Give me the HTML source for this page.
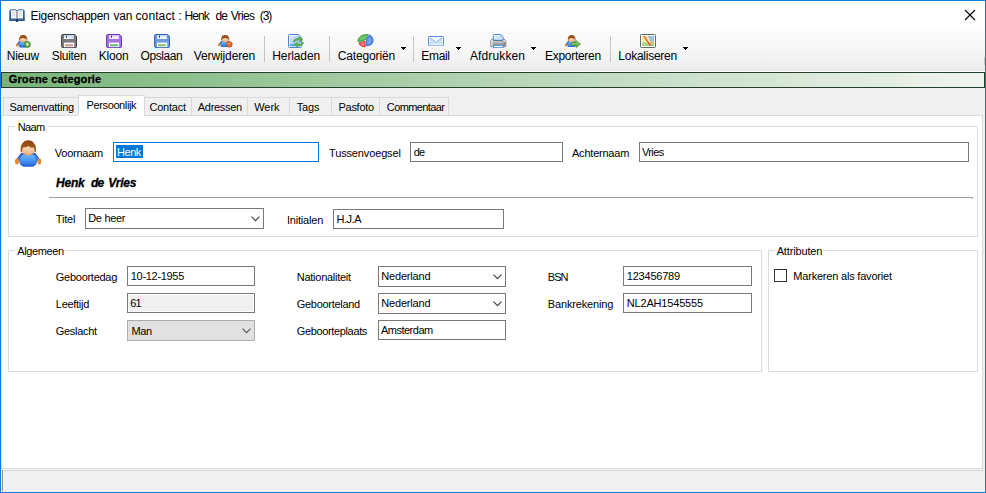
<!DOCTYPE html>
<html lang="nl">
<head>
<meta charset="utf-8">
<title>Eigenschappen van contact : Henk de Vries (3)</title>
<style>
html,body{margin:0;padding:0;}
body{width:986px;height:493px;overflow:hidden;background:#fff;position:relative;font-family:"Liberation Sans",sans-serif;font-size:11px;}
#win{position:absolute;left:0;top:0;width:984px;height:491px;border:1px solid #117cd6;background:#f0f0f0;overflow:hidden;}
.a{position:absolute;box-sizing:border-box;}
.t{position:absolute;white-space:nowrap;line-height:16px;height:16px;}
#titlebar{left:1px;top:1px;width:984px;height:30px;background:#fff;}
#toolbar{left:1px;top:31px;width:984px;height:40px;background:linear-gradient(#fbfbfb 0%,#f8f8f8 35%,#f2f2f2 70%,#ebebeb 100%);}
#tbline{left:1px;top:71px;width:984px;height:1px;background:#fdfdfd;}
.sep{width:1px;height:26px;top:36px;background:#c5c5c5;}
.arr{width:0;height:0;border-left:3px solid transparent;border-right:3px solid transparent;border-top:3px solid #000;top:47px;}
#green{left:1px;top:72px;width:984px;height:16px;border:1px solid #24402a;background:linear-gradient(90deg,#78b478,#f0f4f0);}
.tab{top:97px;height:18px;background:#f0f0f0;border:1px solid #d9d9d9;border-bottom:none;}
.tabsel{top:95px;height:21px;background:#fff;border:1px solid #d9d9d9;border-bottom:none;}
#page{left:1px;top:115px;width:982px;height:354px;background:#fff;border:1px solid #dcdcdc;}
.grp{border:1px solid #dcdcdc;}
.cap{background:#fff;height:12px;}
.inp{background:#fff;border:1px solid #7a7a7a;}
.cmb{background:#fff;border:1px solid #7a7a7a;}
.hr{height:1px;background:#a0a0a0;}
#status{left:4px;top:470px;width:980px;height:21px;background:#f0f0f0;border-top:1px solid #dadada;}
#grip{left:2px;top:470px;width:1px;height:21px;background:#8c8c8c;}
#grip2{left:3px;top:470px;width:1px;height:21px;background:#fafafa;}
</style>
</head>
<body>
<div id="win"></div>
<div class="a" id="titlebar"></div>
<div class="a" id="toolbar"></div>
<div class="a" id="tbline"></div>
<div class="a sep" style="left:264px"></div>
<div class="a sep" style="left:329px"></div>
<div class="a sep" style="left:413px"></div>
<div class="a sep" style="left:610px"></div>
<svg class="a" style="left:400px;top:46px" width="7" height="5" viewBox="0 0 7 5" shape-rendering="crispEdges"><path d="M0 0H7V2H6V3H5V4H4V5H3V4H2V3H1V2H0Z" fill="#fff"/><path d="M1 1H6V2H5V3H4V4H3V3H2V2H1Z" fill="#000"/></svg>
<svg class="a" style="left:455px;top:46px" width="7" height="5" viewBox="0 0 7 5" shape-rendering="crispEdges"><path d="M0 0H7V2H6V3H5V4H4V5H3V4H2V3H1V2H0Z" fill="#fff"/><path d="M1 1H6V2H5V3H4V4H3V3H2V2H1Z" fill="#000"/></svg>
<svg class="a" style="left:530px;top:46px" width="7" height="5" viewBox="0 0 7 5" shape-rendering="crispEdges"><path d="M0 0H7V2H6V3H5V4H4V5H3V4H2V3H1V2H0Z" fill="#fff"/><path d="M1 1H6V2H5V3H4V4H3V3H2V2H1Z" fill="#000"/></svg>
<svg class="a" style="left:682px;top:46px" width="7" height="5" viewBox="0 0 7 5" shape-rendering="crispEdges"><path d="M0 0H7V2H6V3H5V4H4V5H3V4H2V3H1V2H0Z" fill="#fff"/><path d="M1 1H6V2H5V3H4V4H3V3H2V2H1Z" fill="#000"/></svg>
<div class="a" id="green"></div>
<div class="a" style="left:984px;top:57px;width:1px;height:8px;background:#c4c4c4"></div>
<!-- tabs -->
<div class="a" id="page"></div>
<div class="a tab" style="left:3px;width:76px"></div>
<div class="a tab" style="left:144px;width:48px"></div>
<div class="a tab" style="left:191px;width:57px"></div>
<div class="a tab" style="left:247px;width:43px"></div>
<div class="a tab" style="left:289px;width:43px"></div>
<div class="a tab" style="left:331px;width:49px"></div>
<div class="a tab" style="left:379px;width:70px"></div>
<div class="a tabsel" style="left:78px;width:67px"></div>
<!-- group boxes -->
<div class="a grp" style="left:8px;top:126px;width:970px;height:111px"></div>
<div class="a cap" style="left:15px;top:121px;width:32px"></div>
<div class="a grp" style="left:8px;top:250px;width:754px;height:122px"></div>
<div class="a cap" style="left:15px;top:245px;width:50px"></div>
<div class="a grp" style="left:768px;top:250px;width:210px;height:122px"></div>
<div class="a cap" style="left:775px;top:245px;width:48px"></div>
<!-- Naam -->
<div class="a inp" style="left:113px;top:142px;width:206px;height:20px;border-color:#0078d7"></div>
<div class="a" style="left:116px;top:145px;width:27px;height:13px;background:#0078d7"></div>
<div class="a inp" style="left:410px;top:142px;width:153px;height:20px"></div>
<div class="a inp" style="left:639px;top:142px;width:330px;height:20px"></div>
<div class="a hr" style="left:49px;top:197px;width:924px"></div>
<div class="a hr" style="left:972px;top:198px;width:1px"></div>
<div class="a cmb" style="left:85px;top:208px;width:179px;height:21px"></div>
<div class="a inp" style="left:333px;top:209px;width:171px;height:20px"></div>
<!-- Algemeen -->
<div class="a inp" style="left:127px;top:266px;width:128px;height:20px"></div>
<div class="a inp" style="left:127px;top:293px;width:128px;height:20px;background:#f0f0f0;box-shadow:inset 0 0 0 1px #fff"></div>
<div class="a cmb" style="left:127px;top:320px;width:128px;height:21px;background:#e1e1e1;border-color:#adadad"></div>
<div class="a cmb" style="left:378px;top:266px;width:128px;height:21px"></div>
<div class="a cmb" style="left:378px;top:293px;width:128px;height:21px"></div>
<div class="a inp" style="left:378px;top:320px;width:128px;height:20px"></div>
<div class="a inp" style="left:623px;top:266px;width:129px;height:20px"></div>
<div class="a inp" style="left:623px;top:293px;width:129px;height:20px"></div>
<div class="a" style="left:774px;top:269px;width:13px;height:13px;border:1px solid #333;background:#fff"></div>
<div class="a" id="status"></div>
<div class="a" id="grip"></div><div class="a" id="grip2"></div>
<svg width="0" height="0" style="position:absolute">
<defs>
<linearGradient id="gHair" x1="0" y1="0" x2="0" y2="1"><stop offset="0" stop-color="#8a4210"/><stop offset="1" stop-color="#b4641c"/></linearGradient>
<linearGradient id="gBody" x1="0" y1="0" x2="0" y2="1"><stop offset="0" stop-color="#74bcff"/><stop offset="0.55" stop-color="#4796f4"/><stop offset="1" stop-color="#2761d6"/></linearGradient>
<linearGradient id="gFace" x1="0" y1="0" x2="0" y2="1"><stop offset="0" stop-color="#fbe3c8"/><stop offset="1" stop-color="#e9b184"/></linearGradient>
<radialGradient id="gGreenBall" cx="0.5" cy="0.4" r="0.6"><stop offset="0" stop-color="#9fd67a"/><stop offset="1" stop-color="#3d8f1e"/></radialGradient>
<radialGradient id="gOrangeBall" cx="0.45" cy="0.4" r="0.6"><stop offset="0" stop-color="#ff9a58"/><stop offset="1" stop-color="#d24510"/></radialGradient>
<linearGradient id="gPage" x1="0" y1="0" x2="1" y2="1"><stop offset="0" stop-color="#d8e8fb"/><stop offset="1" stop-color="#8db8ee"/></linearGradient>
<linearGradient id="gEnv" x1="0" y1="0" x2="0" y2="1"><stop offset="0" stop-color="#e4effc"/><stop offset="1" stop-color="#a9c9f2"/></linearGradient>
<linearGradient id="gPrn" x1="0" y1="0" x2="0" y2="1"><stop offset="0" stop-color="#e6e6e6"/><stop offset="0.5" stop-color="#b5b5b5"/><stop offset="1" stop-color="#8a8a8a"/></linearGradient>
<linearGradient id="gArrow" x1="0" y1="0" x2="0" y2="1"><stop offset="0" stop-color="#a5d88a"/><stop offset="1" stop-color="#4c9a2a"/></linearGradient>
<linearGradient id="gShut" x1="0" y1="0" x2="1" y2="0"><stop offset="0" stop-color="#ffffff"/><stop offset="1" stop-color="#cfe0f5"/></linearGradient>
<g id="person">
  <path d="M4.2 8.6 L1.3 12.4 M12 8.6 L14.9 12.4" stroke="#2346c0" stroke-width="1.7" fill="none" stroke-linecap="round"/>
  <path d="M4.2 8.8 L1.5 12.3 M12 8.8 L14.7 12.3" stroke="#7db4f5" stroke-width="0.6" fill="none" stroke-linecap="round"/>
  <path d="M3.6 9.6 C4.8 7.9 11.4 7.9 12.6 9.6 C13.9 12 13.2 15.5 11 15.8 L5.2 15.8 C3 15.5 2.3 12 3.6 9.6 Z" fill="url(#gBody)" stroke="#2a5fd0" stroke-width="0.6"/>
  <ellipse cx="1.2" cy="13" rx="1.2" ry="1.8" fill="#e88a2c"/>
  <ellipse cx="15" cy="13" rx="1.2" ry="1.8" fill="#e88a2c"/>
  <ellipse cx="8.2" cy="5.9" rx="3.9" ry="3.3" fill="url(#gFace)" stroke="#c98a55" stroke-width="0.4"/>
  <path d="M3.5 7.2 C2.3 -2.2 14.1 -2.2 12.9 7.2 L12.1 7.2 C12.2 5.8 11.9 5 11.2 4.6 C9.8 4.9 8.8 4.3 8.3 3.5 C7.6 4.3 6 4.5 5.2 4.4 C4.6 5 4.3 6 4.3 7.2 Z" fill="url(#gHair)"/>
</g>
<g id="floppyshape">
  <path d="M1.6 0.5 L13.6 0.5 L15.5 2.4 L15.5 12.6 Q15.5 13.5 14.6 13.5 L1.6 13.5 Q0.6 13.5 0.6 12.6 L0.6 1.5 Q0.6 0.5 1.6 0.5 Z"/>
</g>
</defs>
</svg>
<!-- book -->
<svg class="a" style="left:9px;top:8.8px" width="16" height="13.2" viewBox="0 0 16 13.2">
  <defs><linearGradient id="gBook" x1="0" y1="0" x2="0" y2="1"><stop offset="0" stop-color="#3272b0"/><stop offset="0.6" stop-color="#1f5796"/><stop offset="1" stop-color="#123866"/></linearGradient></defs>
  <path d="M0.3 1.2 L1.4 1.2 L1.4 0.3 L6.4 0.3 L8 1.4 L9.6 0.3 L14.6 0.3 L14.6 1.2 L15.7 1.2 L15.7 12 L9.4 12 L8.6 13 L7.4 13 L6.6 12 L0.3 12 Z" fill="url(#gBook)"/>
  <path d="M2 1.3 L6.2 1.3 L7.6 2.3 L7.6 9.6 L2 9.6 Z" fill="#fff"/>
  <path d="M14 1.3 L9.8 1.3 L8.4 2.3 L8.4 9.6 L14 9.6 Z" fill="#fff"/>
  <rect x="7.2" y="2.2" width="1.6" height="7.6" fill="#b4b4b4"/>
  <rect x="7.7" y="2.2" width="0.6" height="7.6" fill="#8e8e8e"/>
  <path d="M3 3 H6.4 M3 4.9 H6.4 M3 6.8 H6.4 M9.6 3 H13 M9.6 4.9 H13 M9.6 6.8 H13" stroke="#c8c8c8" stroke-width="0.9"/>
  <path d="M1.2 10.9 H7 M9 10.9 H14.8" stroke="#6f9ac8" stroke-width="0.7"/>
</svg>
<!-- close X -->
<svg class="a" style="left:964px;top:9px" width="12" height="12" viewBox="0 0 12 12"><path d="M1 1 L11 11 M11 1 L1 11" stroke="#000" stroke-width="1.1" fill="none"/></svg>
<!-- Nieuw -->
<svg class="a" style="left:16px;top:35px" width="14" height="12.5" viewBox="0 0 16 16" preserveAspectRatio="none"><use href="#person"/></svg>
<svg class="a" style="left:24px;top:41.4px" width="6.8" height="6.8" viewBox="0 0 8 8"><circle cx="4" cy="4" r="3.6" fill="url(#gGreenBall)" stroke="#2f7d18" stroke-width="0.6"/><ellipse cx="4" cy="4" rx="1" ry="2" fill="#fff" opacity="0.9"/></svg>
<!-- Sluiten (gray floppy) -->
<svg class="a" style="left:61px;top:34px" width="16" height="14" viewBox="0 0 16 14">
  <use href="#floppyshape" fill="#7d7d7d" stroke="#3f3f3f" stroke-width="1"/>
  <rect x="3.2" y="1" width="9.6" height="4" fill="url(#gShut)"/><rect x="3.2" y="1" width="9.6" height="1.6" fill="#bfd9f5"/>
  <rect x="5" y="1.6" width="0.9" height="2.3" fill="#333"/>
  <rect x="3" y="8.6" width="10.2" height="4.6" fill="#fff"/><rect x="4" y="10.2" width="8.2" height="2.2" fill="#d89a96"/>
</svg>
<!-- Kloon (purple floppy) -->
<svg class="a" style="left:106px;top:34px" width="16" height="14" viewBox="0 0 16 14">
  <use href="#floppyshape" fill="#a374e0" stroke="#6a2fb8" stroke-width="1"/>
  <rect x="3.2" y="1" width="9.6" height="4" fill="#f3edfb"/><rect x="3.2" y="1" width="9.6" height="1.6" fill="#d9c8f3"/>
  <rect x="5" y="1.6" width="0.9" height="2.3" fill="#3a1c66"/>
  <rect x="3" y="8.6" width="10.2" height="4.6" fill="#fff"/><rect x="4" y="10.2" width="8.2" height="2.2" fill="#6fbf7d"/>
</svg>
<!-- Opslaan (blue floppy) -->
<svg class="a" style="left:154px;top:34px" width="16" height="14" viewBox="0 0 16 14">
  <use href="#floppyshape" fill="#6e9be0" stroke="#2f5fb3" stroke-width="1"/>
  <rect x="3.2" y="1" width="9.6" height="4" fill="#eef4fc"/><rect x="3.2" y="1" width="9.6" height="1.6" fill="#c6daf5"/>
  <rect x="5" y="1.6" width="0.9" height="2.3" fill="#1c3566"/>
  <rect x="3" y="8.6" width="10.2" height="4.6" fill="#fff"/><rect x="4" y="10.2" width="8.2" height="2.2" fill="#8fc46a"/>
</svg>
<!-- Verwijderen -->
<svg class="a" style="left:218px;top:34.6px" width="14" height="12.3" viewBox="0 0 16 16" preserveAspectRatio="none"><use href="#person"/></svg>
<svg class="a" style="left:226.3px;top:41.1px" width="6.7" height="6.7" viewBox="0 0 8 8"><circle cx="4" cy="4" r="3.5" fill="url(#gOrangeBall)" stroke="#c24a12" stroke-width="0.6"/></svg>
<!-- Herladen -->
<svg class="a" style="left:288px;top:34px" width="17" height="14" viewBox="0 0 17 14">
  <path d="M1.4 0.5 L10.6 0.5 L13.6 3.5 L13.6 12.6 Q13.6 13.5 12.7 13.5 L1.4 13.5 Q0.5 13.5 0.5 12.6 L0.5 1.4 Q0.5 0.5 1.4 0.5 Z" fill="#fff" stroke="#4a86d8" stroke-width="1"/>
  <path d="M1.8 1.8 L10 1.8 L12.4 4.2 L12.4 12.2 L1.8 12.2 Z" fill="url(#gPage)"/>
  <rect x="1.8" y="10" width="10.6" height="2.2" fill="#5aaef5"/>
  <path d="M10.4 0.8 L10.4 3.7 L13.3 3.7" fill="#f4f8fe" stroke="#6a9be0" stroke-width="0.6"/>
  <path d="M5.2 7.6 C6.5 4.6 9.5 3.9 11.6 4.6 L11.2 2.6 L15 5.6 L11.9 8.2 L11.9 6.4 C9.6 5.6 7.2 6.6 6.6 8.2 Z" fill="#5fb04a" stroke="#3f8f2c" stroke-width="0.4"/>
  <path d="M15.8 8.8 C14.6 11.6 11.6 12.3 9.6 11.6 L9.9 13.6 L6.2 10.7 L9.2 8.1 L9.3 9.9 C11.4 10.6 13.6 9.9 14.4 8.2 Z" fill="#5fb04a" stroke="#3f8f2c" stroke-width="0.4"/>
</svg>
<!-- Categorien pie -->
<svg class="a" style="left:357px;top:33px" width="18" height="16" viewBox="-1 -1 18 16">
  <path d="M-0.2 7.2 C0 3.5 4 -0.3 10.3 0.5 L7.4 5.6 L1 8.4 Z" fill="#55b355" stroke="#2f962f" stroke-width="0.7" stroke-linejoin="round"/>
  <path d="M1.2 6.4 C2.2 3.8 5 1.8 8.4 1.6 L6.6 4.9 Z" fill="#7ccb7c" opacity="0.8"/>
  <path d="M0.9 9.6 L6.9 6.9 L7.2 13 C4.5 13 1.8 11.8 0.9 9.6 Z" fill="#ee5a5a" stroke="#e02a2a" stroke-width="0.7" stroke-linejoin="round"/>
  <path d="M2.6 9.9 L5.9 8.4 L6 11.6 Z" fill="#f59a9a" opacity="0.8"/>
  <path d="M8.1 11.8 L8.3 5.6 L11.2 0.9 C14 1.6 15.6 4.6 15 7.8 C14.4 10.4 11.4 12.2 8.1 11.8 Z" fill="#4a86e2" stroke="#2c62c8" stroke-width="0.7" stroke-linejoin="round"/>
  <path d="M9.4 10.4 L9.5 6 L11.4 2.8 C13.2 3.8 13.8 6 13.4 7.8 C13 9.4 11.4 10.4 9.4 10.4 Z" fill="#7aa9f0" opacity="0.8"/>
</svg>
<!-- Email -->
<svg class="a" style="left:428px;top:35.7px" width="16" height="10" viewBox="0 0 16 10">
  <rect x="0.5" y="0.5" width="15" height="9" rx="0.6" fill="#fff" stroke="#5b8fdc" stroke-width="1"/>
  <path d="M0.5 9.5 H15.5" stroke="#9dbfe9" stroke-width="1"/>
  <rect x="1.6" y="1.5" width="12.8" height="7" fill="#d3e4fa"/>
  <path d="M1.8 1.5 L8 6.2 L14.2 1.5 Z" fill="#f2f7fe"/>
  <path d="M1.8 1.7 L8 6.4 L14.2 1.7" fill="none" stroke="#86aee8" stroke-width="0.9"/>
  <path d="M1.8 8.4 L6 4.9 M14.2 8.4 L10 4.9" stroke="#b3cdf2" stroke-width="0.6"/>
</svg>
<!-- Afdrukken -->
<svg class="a" style="left:490px;top:34px" width="17" height="14" viewBox="0 0 17 14">
  <path d="M2.2 5.2 C0.8 5.8 0.3 7 0.3 8.4 L0.3 11.6 Q0.3 12.7 1.4 12.7 L14.8 12.7 Q15.9 12.7 15.9 11.6 L15.9 8.4 C15.9 7 15.4 5.8 14 5.2 Z" fill="#f0f0f0" stroke="#555" stroke-width="0.7"/>
  <path d="M0.8 8.2 L0.8 11.6 Q0.8 12.3 1.5 12.3 L3 12.3 L3 7 Z" fill="#cfcfcf"/>
  <path d="M15.4 8.2 L15.4 11.6 Q15.4 12.3 14.7 12.3 L13.2 12.3 L13.2 7 Z" fill="#8a8a8a"/>
  <rect x="3" y="6.2" width="10.2" height="5" fill="url(#gPrn)"/>
  <rect x="3" y="6.2" width="10.2" height="0.9" fill="#5a5a5a"/>
  <path d="M4.2 0.5 L10.8 0.5 L13 2.7 L13 6 L3.3 6 L3.3 1.4 Q3.3 0.5 4.2 0.5 Z" fill="#fff" stroke="#3f86dc" stroke-width="1"/>
  <path d="M4.6 1.7 L10.2 1.7 L11.8 3.3 L11.8 5.5 L4.6 5.5 Z" fill="#cfe2fa"/>
  <path d="M10.4 1 L10.4 3.2 L12.6 3.2" fill="#eaf2fd" stroke="#7aa9e6" stroke-width="0.5"/>
  <rect x="3.4" y="11.3" width="9.6" height="2.4" fill="#fff" stroke="#3f86dc" stroke-width="0.9"/>
</svg>
<!-- Exporteren -->
<svg class="a" style="left:565px;top:34.8px" width="13" height="12.5" viewBox="0 0 16 16" preserveAspectRatio="none"><use href="#person"/></svg>
<svg class="a" style="left:571px;top:40px" width="10" height="8" viewBox="0 0 10 8"><path d="M0.4 2.4 L5 2.4 L5 0.4 L9.6 4 L5 7.6 L5 5.6 L0.4 5.6 Z" fill="url(#gArrow)" stroke="#3c8a24" stroke-width="0.6"/></svg>
<!-- Lokaliseren map -->
<svg class="a" style="left:640px;top:34px" width="16" height="14" viewBox="0 0 16 14">
  <rect x="0.5" y="0.5" width="15" height="13" rx="0.8" fill="#fff" stroke="#5e6e5e" stroke-width="1"/>
  <rect x="2" y="2" width="12" height="10" fill="#f0ea80"/>
  <path d="M8 2 L14 2 L14 7 C12.6 7.4 11.4 7.6 10.2 7.2 Z" fill="#8cb2ea"/>
  <path d="M2 9 C3.6 7.6 5.4 7.8 7 8.6 C8.6 9.6 10.4 8 11.6 7.6 C12.6 7.3 13.4 7.2 14 7 L14 12 L2 12 Z" fill="#98d27a"/>
  <path d="M4 2 V12 M6 2 V12 M8 2 V12 M10 2 V12 M12 2 V12 M2 4 H14 M2 6 H14 M2 8 H14 M2 10 H14" stroke="#fff" stroke-width="0.35" opacity="0.55"/>
  <path d="M7.4 10.8 C9 10.6 10.4 9.6 11.4 9 C12.2 8.6 13 8.2 13.8 7.6" stroke="#f0a238" stroke-width="1" fill="none"/>
  <path d="M3.9 2 L10.6 12" stroke="#f04444" stroke-width="1.3"/>
</svg>
<!-- Big person -->
<svg class="a" style="left:15px;top:140px;filter:blur(0.4px)" width="26" height="26.5" viewBox="0 0 16 16" preserveAspectRatio="none"><use href="#person"/></svg>
<!-- chevrons -->
<svg class="a" style="left:250.5px;top:216.3px" width="9" height="6" viewBox="0 0 9 6"><path d="M0.5 0.7 L4.5 4.7 L8.5 0.7" stroke="#404040" stroke-width="1.15" fill="none"/></svg>
<svg class="a" style="left:241.5px;top:328.3px" width="9" height="6" viewBox="0 0 9 6"><path d="M0.5 0.7 L4.5 4.7 L8.5 0.7" stroke="#555" stroke-width="1.1" fill="none"/></svg>
<svg class="a" style="left:492.5px;top:274.3px" width="9" height="6" viewBox="0 0 9 6"><path d="M0.5 0.7 L4.5 4.7 L8.5 0.7" stroke="#404040" stroke-width="1.15" fill="none"/></svg>
<svg class="a" style="left:492.5px;top:301.3px" width="9" height="6" viewBox="0 0 9 6"><path d="M0.5 0.7 L4.5 4.7 L8.5 0.7" stroke="#404040" stroke-width="1.15" fill="none"/></svg>

<span class="t" style='left:30.50px;top:8px;font:12px "Liberation Sans", sans-serif;line-height:16px;letter-spacing:-0.29px;color:#000'>Eigenschappen</span>
<span class="t" style='left:113.60px;top:8px;font:12px "Liberation Sans", sans-serif;line-height:16px;letter-spacing:-0.24px;color:#000'>van</span>
<span class="t" style='left:135.50px;top:8px;font:12px "Liberation Sans", sans-serif;line-height:16px;letter-spacing:0.11px;color:#000'>contact</span>
<span class="t" style='left:178.50px;top:8px;font:12px "Liberation Sans", sans-serif;line-height:16px;letter-spacing:0px;color:#000'>:</span>
<span class="t" style='left:184.50px;top:8px;font:12px "Liberation Sans", sans-serif;line-height:16px;letter-spacing:-0.9px;color:#000'>Henk</span>
<span class="t" style='left:215.50px;top:8px;font:12px "Liberation Sans", sans-serif;line-height:16px;letter-spacing:-1.0px;color:#000'>de</span>
<span class="t" style='left:230.70px;top:8px;font:12px "Liberation Sans", sans-serif;line-height:16px;letter-spacing:-0.65px;color:#000'>Vries</span>
<span class="t" style='left:259.70px;top:8px;font:12px "Liberation Sans", sans-serif;line-height:16px;letter-spacing:-1.0px;color:#000'>(3)</span>
<span class="t" style='left:6.70px;top:48px;font:12px "Liberation Sans", sans-serif;line-height:16px;letter-spacing:-0.22px;color:#000'>Nieuw</span>
<span class="t" style='left:51.70px;top:48px;font:12px "Liberation Sans", sans-serif;line-height:16px;letter-spacing:-0.29px;color:#000'>Sluiten</span>
<span class="t" style='left:98.80px;top:48px;font:12px "Liberation Sans", sans-serif;line-height:16px;letter-spacing:-0.2px;color:#000'>Kloon</span>
<span class="t" style='left:140.50px;top:48px;font:12px "Liberation Sans", sans-serif;line-height:16px;letter-spacing:-0.42px;color:#000'>Opslaan</span>
<span class="t" style='left:193.80px;top:48px;font:12px "Liberation Sans", sans-serif;line-height:16px;letter-spacing:-0.12px;color:#000'>Verwijderen</span>
<span class="t" style='left:272.30px;top:48px;font:12px "Liberation Sans", sans-serif;line-height:16px;letter-spacing:-0.12px;color:#000'>Herladen</span>
<span class="t" style='left:337.70px;top:48px;font:12px "Liberation Sans", sans-serif;line-height:16px;letter-spacing:-0.14px;color:#000'>Categoriën</span>
<span class="t" style='left:421.30px;top:48px;font:12px "Liberation Sans", sans-serif;line-height:16px;letter-spacing:-0.33px;color:#000'>Email</span>
<span class="t" style='left:470.00px;top:48px;font:12px "Liberation Sans", sans-serif;line-height:16px;letter-spacing:0.12px;color:#000'>Afdrukken</span>
<span class="t" style='left:545.00px;top:48px;font:12px "Liberation Sans", sans-serif;line-height:16px;letter-spacing:-0.29px;color:#000'>Exporteren</span>
<span class="t" style='left:618.30px;top:48px;font:12px "Liberation Sans", sans-serif;line-height:16px;letter-spacing:-0.25px;color:#000'>Lokaliseren</span>
<span class="t" style='left:8.80px;top:71px;font:bold 11px "Liberation Sans", sans-serif;line-height:16px;letter-spacing:0.12px;color:#000;-webkit-text-stroke:0.3px #000'>Groene categorie</span>
<span class="t" style='left:9.50px;top:99px;font:11px "Liberation Sans", sans-serif;line-height:16px;letter-spacing:-0.24px;color:#000'>Samenvatting</span>
<span class="t" style='left:86.60px;top:97px;font:11px "Liberation Sans", sans-serif;line-height:16px;letter-spacing:-0.39px;color:#000'>Persoonlijk</span>
<span class="t" style='left:149.50px;top:99px;font:11px "Liberation Sans", sans-serif;line-height:16px;letter-spacing:-0.23px;color:#000'>Contact</span>
<span class="t" style='left:197.80px;top:99px;font:11px "Liberation Sans", sans-serif;line-height:16px;letter-spacing:-0.31px;color:#000'>Adressen</span>
<span class="t" style='left:254.20px;top:99px;font:11px "Liberation Sans", sans-serif;line-height:16px;letter-spacing:-0.05px;color:#000'>Werk</span>
<span class="t" style='left:296.80px;top:99px;font:11px "Liberation Sans", sans-serif;line-height:16px;letter-spacing:-0.18px;color:#000'>Tags</span>
<span class="t" style='left:338.50px;top:99px;font:11px "Liberation Sans", sans-serif;line-height:16px;letter-spacing:-0.28px;color:#000'>Pasfoto</span>
<span class="t" style='left:386.80px;top:99px;font:11px "Liberation Sans", sans-serif;line-height:16px;letter-spacing:-0.61px;color:#000'>Commentaar</span>
<span class="t" style='left:17.80px;top:119px;font:11px "Liberation Sans", sans-serif;line-height:16px;letter-spacing:-0.66px;color:#000'>Naam</span>
<span class="t" style='left:54.80px;top:145px;font:11px "Liberation Sans", sans-serif;line-height:16px;letter-spacing:-0.25px;color:#000'>Voornaam</span>
<span class="t" style='left:117.10px;top:144px;font:11px "Liberation Sans", sans-serif;line-height:16px;letter-spacing:-0.49px;color:#fff'>Henk</span>
<span class="t" style='left:329.00px;top:145px;font:11px "Liberation Sans", sans-serif;line-height:16px;letter-spacing:-0.14px;color:#000'>Tussenvoegsel</span>
<span class="t" style='left:413.70px;top:144px;font:11px "Liberation Sans", sans-serif;line-height:16px;letter-spacing:-0.82px;color:#000'>de</span>
<span class="t" style='left:572.00px;top:145px;font:11px "Liberation Sans", sans-serif;line-height:16px;letter-spacing:-0.22px;color:#000'>Achternaam</span>
<span class="t" style='left:642.00px;top:144px;font:11px "Liberation Sans", sans-serif;line-height:16px;letter-spacing:-0.61px;color:#000'>Vries</span>
<span class="t" style='left:56.10px;top:175px;font:italic bold 12px "Liberation Sans", sans-serif;line-height:16px;letter-spacing:-0.26px;color:#000;-webkit-text-stroke:0.3px #000'>Henk</span>
<span class="t" style='left:91.10px;top:175px;font:italic bold 12px "Liberation Sans", sans-serif;line-height:16px;letter-spacing:-1.0px;color:#000;-webkit-text-stroke:0.3px #000'>de</span>
<span class="t" style='left:108.30px;top:175px;font:italic bold 12px "Liberation Sans", sans-serif;line-height:16px;letter-spacing:-0.27px;color:#000;-webkit-text-stroke:0.3px #000'>Vries</span>
<span class="t" style='left:55.80px;top:211px;font:11px "Liberation Sans", sans-serif;line-height:16px;letter-spacing:-0.18px;color:#000'>Titel</span>
<span class="t" style='left:88.20px;top:210px;font:11px "Liberation Sans", sans-serif;line-height:16px;letter-spacing:-0.31px;color:#000'>De heer</span>
<span class="t" style='left:286.90px;top:212px;font:11px "Liberation Sans", sans-serif;line-height:16px;letter-spacing:-0.19px;color:#000'>Initialen</span>
<span class="t" style='left:336.60px;top:211px;font:11px "Liberation Sans", sans-serif;line-height:16px;letter-spacing:-0.49px;color:#000'>H.J.A</span>
<span class="t" style='left:17.20px;top:243px;font:11px "Liberation Sans", sans-serif;line-height:16px;letter-spacing:-0.37px;color:#000'>Algemeen</span>
<span class="t" style='left:55.80px;top:269px;font:11px "Liberation Sans", sans-serif;line-height:16px;letter-spacing:-0.27px;color:#000'>Geboortedag</span>
<span class="t" style='left:130.80px;top:268px;font:11px "Liberation Sans", sans-serif;line-height:16px;letter-spacing:-0.31px;color:#000'>10-12-1955</span>
<span class="t" style='left:55.80px;top:296px;font:11px "Liberation Sans", sans-serif;line-height:16px;letter-spacing:-0.28px;color:#000'>Leeftijd</span>
<span class="t" style='left:130.30px;top:295px;font:11px "Liberation Sans", sans-serif;line-height:16px;letter-spacing:-1.0px;color:#000'>61</span>
<span class="t" style='left:55.80px;top:323px;font:11px "Liberation Sans", sans-serif;line-height:16px;letter-spacing:-0.31px;color:#000'>Geslacht</span>
<span class="t" style='left:131.60px;top:323px;font:11px "Liberation Sans", sans-serif;line-height:16px;letter-spacing:-0.39px;color:#000'>Man</span>
<span class="t" style='left:296.80px;top:269px;font:11px "Liberation Sans", sans-serif;line-height:16px;letter-spacing:-0.27px;color:#000'>Nationaliteit</span>
<span class="t" style='left:381.30px;top:268px;font:11px "Liberation Sans", sans-serif;line-height:16px;letter-spacing:-0.19px;color:#000'>Nederland</span>
<span class="t" style='left:296.80px;top:296px;font:11px "Liberation Sans", sans-serif;line-height:16px;letter-spacing:-0.3px;color:#000'>Geboorteland</span>
<span class="t" style='left:381.30px;top:295px;font:11px "Liberation Sans", sans-serif;line-height:16px;letter-spacing:-0.19px;color:#000'>Nederland</span>
<span class="t" style='left:296.80px;top:323px;font:11px "Liberation Sans", sans-serif;line-height:16px;letter-spacing:-0.36px;color:#000'>Geboorteplaats</span>
<span class="t" style='left:381.00px;top:322px;font:11px "Liberation Sans", sans-serif;line-height:16px;letter-spacing:-0.51px;color:#000'>Amsterdam</span>
<span class="t" style='left:547.80px;top:269px;font:11px "Liberation Sans", sans-serif;line-height:16px;letter-spacing:-1.0px;color:#000'>BSN</span>
<span class="t" style='left:626.80px;top:268px;font:11px "Liberation Sans", sans-serif;line-height:16px;letter-spacing:-0.22px;color:#000'>123456789</span>
<span class="t" style='left:547.80px;top:296px;font:11px "Liberation Sans", sans-serif;line-height:16px;letter-spacing:-0.16px;color:#000'>Bankrekening</span>
<span class="t" style='left:626.80px;top:295px;font:11px "Liberation Sans", sans-serif;line-height:16px;letter-spacing:-0.18px;color:#000'>NL2AH1545555</span>
<span class="t" style='left:776.70px;top:243px;font:11px "Liberation Sans", sans-serif;line-height:16px;letter-spacing:-0.15px;color:#000'>Attributen</span>
<span class="t" style='left:793.30px;top:268px;font:11px "Liberation Sans", sans-serif;line-height:16px;letter-spacing:-0.2px;color:#000'>Markeren als favoriet</span>
</body>
</html>
